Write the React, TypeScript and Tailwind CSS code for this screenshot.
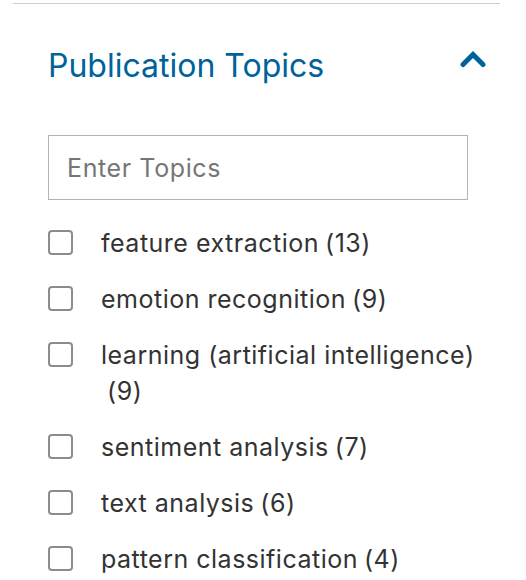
import React from "react";

type Topic = {
  label: string;
  count: number;
};

const topics: Topic[] = [
  { label: "feature extraction", count: 13 },
  { label: "emotion recognition", count: 9 },
  { label: "learning (artificial intelligence)", count: 9 },
  { label: "sentiment analysis", count: 7 },
  { label: "text analysis", count: 6 },
  { label: "pattern classification", count: 4 },
];

const App: React.FC = () => {
  return (
    <div className="min-h-screen bg-white pt-[3px] font-['Inter',sans-serif]">
      <div className="ml-[13px] mr-[26px] border-t border-[#cccccc]" />
      <div className="pl-[48px] pr-[40px]">
        <div className="mt-[40px] flex h-[44px] items-center justify-between">
          <h2 className="text-[32px] leading-none text-[#00629b]">Publication Topics</h2>
          <svg width="26" height="18" viewBox="0 0 26 18" className="mb-[14px] text-[#00629b]">
            <path
              d="M3 14.5 13 4.5l10 10"
              fill="none"
              stroke="currentColor"
              strokeWidth={5}
              strokeLinecap="round"
              strokeLinejoin="miter"
            />
          </svg>
        </div>

        <input
          type="text"
          placeholder="Enter Topics"
          className="mt-[47px] block h-[65px] w-[420px] border border-[#b3b3b3] px-[18px] text-[25px] tracking-[0.6px] text-[#333] outline-none placeholder:text-[#767676]"
        />

        <ul className="mt-[25px] flex flex-col gap-[20px]">
          {topics.map((t) => (
            <li key={t.label} className="flex items-start">
              <span className="mt-[5px] h-[25px] w-[25px] shrink-0 rounded-[4px] border-2 border-[#8c8c8c]" />
              <span className="ml-[28px] w-[380px] text-[25px] leading-[36px] tracking-[0.5px] text-[#333333]">
                <span>{t.label}</span>
                <span className="ml-[6px] inline-block">({t.count})</span>
              </span>
            </li>
          ))}
        </ul>
      </div>
    </div>
  );
};

export default App;
